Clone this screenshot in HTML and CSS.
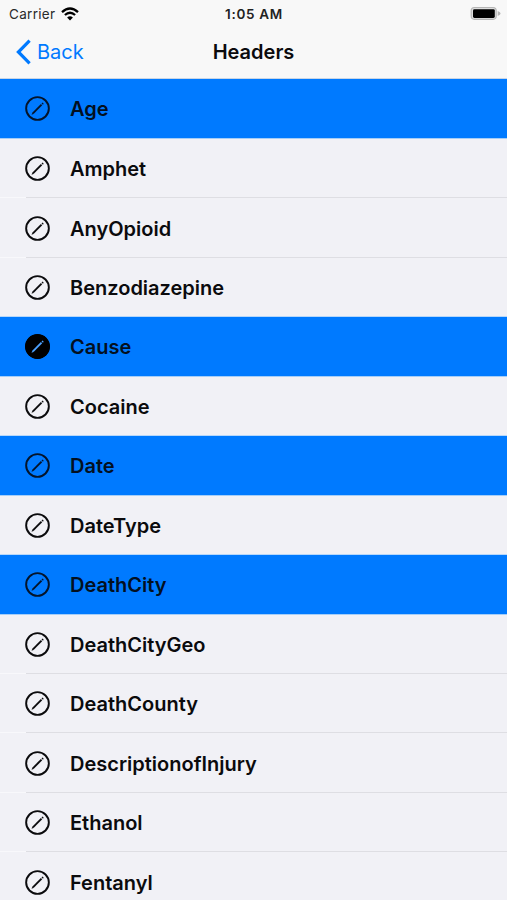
FILE: index.html
```html
<!DOCTYPE html>
<html lang="en">
<head>
<meta charset="utf-8">
<title>Headers</title>
<link rel="stylesheet" href="styles.css">
</head>
<body>
<svg width="0" height="0" class="defs" aria-hidden="true">
  <symbol id="pencil" viewBox="0 0 26 26">
    <circle class="ring" cx="13" cy="13" r="11.8"/>
    <path class="shaft" d="M8.2 18 17.2 9"/>
    <path class="tip" d="M17.9 8.3 18.8 7.4"/>
    <path class="point" d="M6.8 19.4 7.6 17.3 8.9 18.6Z"/>
  </symbol>
</svg>
<header class="top">
  <div class="status">
    <div class="carrier"><span>Carrier</span>
      <svg class="wifi" viewBox="0 0 18 14"><path d="M1 5.1Q9-2.1 17 5.1"/><path d="M3.9 8Q9 3.5 14.1 8"/><path class="dot" d="M6.1 10.5Q9 8.1 11.9 10.5L9 13.4Z"/></svg>
    </div>
    <div class="time">1:05 AM</div>
    <svg class="battery" viewBox="0 0 31 15"><rect class="shell" x=".6" y=".9" width="26.2" height="13" rx="3.8"/><rect class="gap" x="1.8" y="2" width="23.8" height="10.8" rx="2.6"/><rect x="3" y="3.2" width="21.8" height="8.8" rx="1.4"/><path class="shell" d="M27.7 4.9Q30.6 6 30.6 7.4T27.7 9.9Z"/></svg>
  </div>
  <nav class="nav">
    <a class="back"><svg viewBox="0 0 16 26"><path d="M13.6 1.7 2.4 13 13.6 24.3"/></svg><span>Back</span></a>
    <h1>Headers</h1>
  </nav>
</header>
<ul class="list">
  <li class="row on"><svg><use href="#pencil"/></svg><span>Age</span></li>
  <li class="row"><svg><use href="#pencil"/></svg><span>Amphet</span></li>
  <li class="row"><svg><use href="#pencil"/></svg><span>AnyOpioid</span></li>
  <li class="row"><svg><use href="#pencil"/></svg><span>Benzodiazepine</span></li>
  <li class="row on filled"><svg><use href="#pencil"/></svg><span>Cause</span></li>
  <li class="row"><svg><use href="#pencil"/></svg><span>Cocaine</span></li>
  <li class="row on"><svg><use href="#pencil"/></svg><span>Date</span></li>
  <li class="row"><svg><use href="#pencil"/></svg><span>DateType</span></li>
  <li class="row on"><svg><use href="#pencil"/></svg><span>DeathCity</span></li>
  <li class="row"><svg><use href="#pencil"/></svg><span>DeathCityGeo</span></li>
  <li class="row"><svg><use href="#pencil"/></svg><span>DeathCounty</span></li>
  <li class="row"><svg><use href="#pencil"/></svg><span>DescriptionofInjury</span></li>
  <li class="row"><svg><use href="#pencil"/></svg><span>Ethanol</span></li>
  <li class="row"><svg><use href="#pencil"/></svg><span>Fentanyl</span></li>
</ul>
</body>
</html>
```
FILE: styles.css
```css
* { box-sizing: border-box; }
body {
  margin: 0;
  height: 900px;
  overflow: hidden;
  background: #f1f1f6;
  color: #0b0b0d;
  font-family: Inter, "Liberation Sans", sans-serif;
}
.defs { display: block; height: 0; }
.top { height: 79px; background: #f8f8f8; border-bottom: 1px solid #c8d5e6; }
.status {
  height: 27px;
  display: grid;
  grid-template-columns: 1fr auto 1fr;
  align-items: center;
  padding: 0 6px 0 9px;
  font-size: 13.5px;
}
.carrier { display: flex; align-items: center; gap: 6px; color: #2a2a2a; letter-spacing: 0.3px; }
.wifi { width: 18px; height: 14px; fill: none; stroke: #000; stroke-width: 2.3; }
.wifi .dot { fill: #000; stroke: none; }
.time { font-weight: 600; color: #222; letter-spacing: 0.7px; margin-right: 2px; }
.battery { width: 31px; height: 15px; justify-self: end; }
.shell { fill: #b5b5b5; }
.gap { fill: #dedede; }
.nav {
  height: 50px;
  display: grid;
  grid-template-columns: 1fr auto 1fr;
  align-items: center;
  padding: 0 16px;
}
.back { display: flex; align-items: center; gap: 5px; color: #007aff; font-size: 20px; }
.back svg { width: 16px; height: 26px; fill: none; stroke: #007aff; stroke-width: 3.2; }
h1 { margin: 0; font-size: 20px; font-weight: 600; }
.list { margin: 0; padding: 0; list-style: none; }
.row {
  height: 59.46px;
  display: flex;
  align-items: center;
  gap: 20px;
  padding-left: 25px;
  font-size: 20px;
  font-weight: 600;
  background: linear-gradient(#dedee3, #dedee3) 26px 100% / 100% 1px no-repeat, linear-gradient(#f8f8fb, #f8f8fb) 0 100% / 26px 1px no-repeat;
}
.row:first-child { height: 59.9px; }
.row span { padding-top: 1px; }
.row.on { background: linear-gradient(#a5cef8, #a5cef8) 0 100% / 100% 1px no-repeat #007aff; color: #03101f; }
.row:has(+ .on) { background: linear-gradient(#b8d8fa, #b8d8fa) 0 100% / 100% 1px no-repeat; }
.row svg { width: 25px; height: 25px; flex: none; color: #0b0b0d; }
.row.on svg { color: #04142a; }
.ring { fill: none; stroke: var(--ring, currentColor); stroke-width: 2; }
.shaft { fill: none; stroke: currentColor; stroke-width: 2; }
.tip { fill: none; stroke: currentColor; stroke-width: 2; }
.point { fill: currentColor; }
.row.filled { --ring: #000; }
.row.filled svg { color: #4da2ff; background: #000; border-radius: 50%; }
```
